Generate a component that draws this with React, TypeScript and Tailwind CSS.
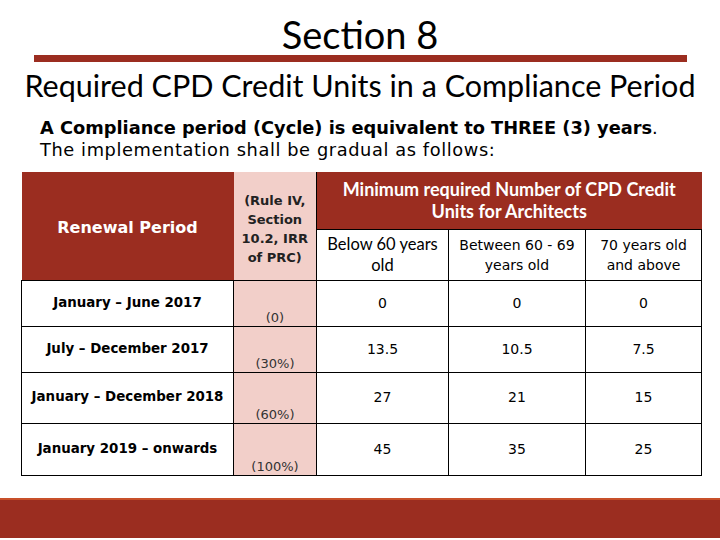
const calibri = "font-['Lato','Open_Sans',sans-serif]";
const tahoma = "font-['DejaVu_Sans','Liberation_Sans',sans-serif]";

const rows = [
  { period: 'January – June 2017', share: '(0)', values: ['0', '0', '0'], h: 'h-[46px]' },
  { period: 'July – December 2017', share: '(30%)', values: ['13.5', '10.5', '7.5'], h: 'h-[46px]' },
  { period: 'January – December 2018', share: '(60%)', values: ['27', '21', '15'], h: 'h-[51px]' },
  { period: 'January 2019 – onwards', share: '(100%)', values: ['45', '35', '25'], h: 'h-[52px]' },
];

export default function App() {
  return (
    <div className="flex h-[540px] w-[720px] flex-col overflow-hidden bg-white text-black">
      <header className="flex flex-col items-center pt-[13px]">
        <h1 className={`${calibri} text-[38px] leading-[42px]`}>Section 8</h1>
        <div className="h-[7px] w-[653px] bg-[#9b2d20]" />
        <h2 className={`${calibri} mt-[5px] text-[30.5px] leading-[36px]`}>
          Required CPD Credit Units in a Compliance Period
        </h2>
      </header>

      <div className={`${tahoma} pl-[40px] pt-[14px] text-[17.8px] leading-[22px]`}>
        <p>
          <span className="font-bold">A Compliance period (Cycle) is equivalent to THREE (3) years</span>.
        </p>
        <p className="tracking-[0.6px]">The implementation shall be gradual as follows:</p>
      </div>

      <div className="pl-[21px] pt-[11px]">
        <table className="w-[680px] table-fixed border-collapse">
          <colgroup>
            <col className="w-[212px]" />
            <col className="w-[83px]" />
            <col className="w-[132px]" />
            <col className="w-[137px]" />
            <col className="w-[116px]" />
          </colgroup>
          <thead>
            <tr className="h-[57px]">
              <th
                rowSpan={2}
                className={`${tahoma} bg-[#9b2d20] pt-[4px] text-[16px] font-bold text-white`}
              >
                Renewal Period
              </th>
              <th
                rowSpan={2}
                className={`${tahoma} border-r border-black bg-[#f2cfc9] pt-[6px] text-[13px] font-bold leading-[19px] text-[#222]`}
              >
                (Rule IV,
                <br />
                Section
                <br />
                10.2, IRR
                <br />
                of PRC)
              </th>
              <th
                colSpan={3}
                className={`${calibri} bg-[#9b2d20] px-[18px] text-[18px] font-bold leading-[22px] text-white`}
              >
                Minimum required Number of CPD Credit Units for Architects
              </th>
            </tr>
            <tr className="h-[51px]">
              <th className={`${calibri} border border-black text-[16.5px] font-normal leading-[21px]`}>
                Below 60 years old
              </th>
              <th className={`${tahoma} border border-black px-2 text-[14px] font-normal leading-[20px]`}>
                Between 60 - 69 years old
              </th>
              <th className={`${tahoma} border border-black px-3 text-[14px] font-normal leading-[20px]`}>
                70 years old and above
              </th>
            </tr>
          </thead>
          <tbody>
            {rows.map((row) => (
              <tr key={row.period} className={row.h}>
                <td className={`${tahoma} border border-black text-center text-[13.4px] font-bold`}>
                  {row.period}
                </td>
                <td
                  className={`${tahoma} border border-black bg-[#f2cfc9] text-center align-bottom text-[13px] leading-[16px] text-[#333]`}
                >
                  {row.share}
                </td>
                {row.values.map((v, i) => (
                  <td key={i} className={`${tahoma} border border-black text-center text-[14px]`}>
                    {v}
                  </td>
                ))}
              </tr>
            ))}
          </tbody>
        </table>
      </div>

      <footer className="mt-auto mb-[2px] h-[40px] border-t-[2px] border-[#c8502a] bg-[#9b2d20]" />
    </div>
  );
}
